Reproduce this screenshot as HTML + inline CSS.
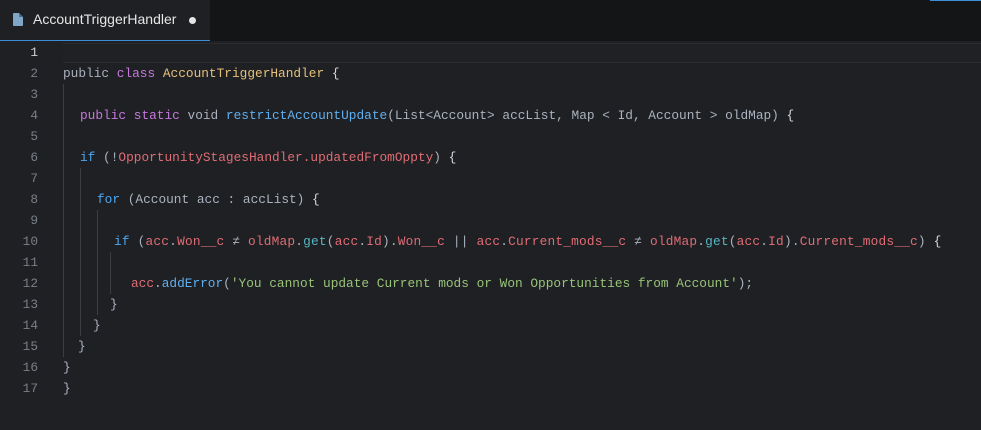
<!DOCTYPE html>
<html><head><meta charset="utf-8"><style>
html,body{margin:0;padding:0;background:#1e2023;width:981px;height:430px;overflow:hidden;position:relative}
.tabbar{position:absolute;left:0;top:0;width:981px;height:41px;background:#141517}
.tab{position:absolute;left:0;top:0;width:210px;height:40px;background:#1e2023;border-bottom:1px solid #3a8fd6}
.tab .t{position:absolute;left:33px;top:11px;font:14px "Liberation Sans",sans-serif;color:#e6e6e6}
.tab .dot{position:absolute;left:189px;top:17px;width:7px;height:7px;border-radius:50%;background:#e6e6e6}
.topblue{position:absolute;left:930px;top:0;width:51px;height:1px;background:#3a8fd6}
.cur{position:absolute;left:63px;top:43px;width:918px;height:18px;border-top:1px solid #2a2c30;border-bottom:1px solid #2a2c30;background:#1f2124}
.ln{position:absolute;width:38px;text-align:right;left:0;font:12.8px "Liberation Mono",monospace;color:#7a7f87}
.c{position:absolute;font:12.8px "Liberation Mono",monospace;color:#abb2bf;white-space:pre}
.g{position:absolute;width:1px;background:#3a3d42}
.k{color:#c678dd}.b{color:#4ea6f0}.y{color:#e5c07b}.f{color:#61afef}.r{color:#e06c75}.s{color:#98c379}.cy{color:#56b6c2}.w{color:#d7dae0}
</style></head><body>
<div class="tabbar"></div>
<div class="tab"><svg style="position:absolute;left:13px;top:13px" width="10" height="13" viewBox="0 0 10 13"><path d="M0 1 Q0 0 1 0 L6 0 L10 4 L10 12 Q10 13 9 13 L1 13 Q0 13 0 12Z" fill="#7fa7c8"/><path d="M6 0 L6 4 L10 4Z" fill="#4d6f8c"/></svg><span class="t">AccountTriggerHandler</span><span class="dot"></span></div>
<div class="topblue"></div>
<div class="cur"></div>
<div class="g" style="left:63px;top:84px;height:273px"></div>
<div class="g" style="left:80px;top:168px;height:168px"></div>
<div class="g" style="left:97px;top:210px;height:105px"></div>
<div class="g" style="left:110px;top:252px;height:42px"></div>

<div class="ln" style="top:45px;color:#d0d0d0">1</div>
<div class="ln" style="top:66px">2</div>
<div class="ln" style="top:87px">3</div>
<div class="ln" style="top:108px">4</div>
<div class="ln" style="top:129px">5</div>
<div class="ln" style="top:150px">6</div>
<div class="ln" style="top:171px">7</div>
<div class="ln" style="top:192px">8</div>
<div class="ln" style="top:213px">9</div>
<div class="ln" style="top:234px">10</div>
<div class="ln" style="top:255px">11</div>
<div class="ln" style="top:276px">12</div>
<div class="ln" style="top:297px">13</div>
<div class="ln" style="top:318px">14</div>
<div class="ln" style="top:339px">15</div>
<div class="ln" style="top:360px">16</div>
<div class="ln" style="top:381px">17</div>

<div class="c" style="left:63px;top:66px">public <span class="k">class</span> <span class="y">AccountTriggerHandler</span> <span class="w">{</span></div>
<div class="c" style="left:80px;top:108px"><span class="k">public</span> <span class="k">static</span> void <span class="f">restrictAccountUpdate</span>(List&lt;Account&gt; accList, Map &lt; Id, Account &gt; oldMap) <span class="w">{</span></div>
<div class="c" style="left:80px;top:150px"><span class="b">if</span> (!<span class="r">OpportunityStagesHandler.updatedFromOppty</span>) <span class="w">{</span></div>
<div class="c" style="left:97px;top:192px"><span class="b">for</span> (Account acc : accList) <span class="w">{</span></div>
<div class="c" style="left:114px;top:234px;letter-spacing:0.2px"><span class="b">if</span> (<span class="r">acc</span>.<span class="r">Won__c</span> ≠ <span class="r">oldMap</span>.<span class="cy">get</span>(<span class="r">acc</span>.<span class="r">Id</span>).<span class="r">Won__c</span> || <span class="r">acc</span>.<span class="r">Current_mods__c</span> ≠ <span class="r">oldMap</span>.<span class="cy">get</span>(<span class="r">acc</span>.<span class="r">Id</span>).<span class="r">Current_mods__c</span>) <span class="w">{</span></div>
<div class="c" style="left:131px;top:276px"><span class="r">acc</span>.<span class="f">addError</span>(<span class="s">'You cannot update Current mods or Won Opportunities from Account'</span>);</div>
<div class="c" style="left:110px;top:297px">}</div>
<div class="c" style="left:93px;top:318px">}</div>
<div class="c" style="left:78px;top:339px">}</div>
<div class="c" style="left:63px;top:360px">}</div>
<div class="c" style="left:63px;top:381px">}</div>
</body></html>
